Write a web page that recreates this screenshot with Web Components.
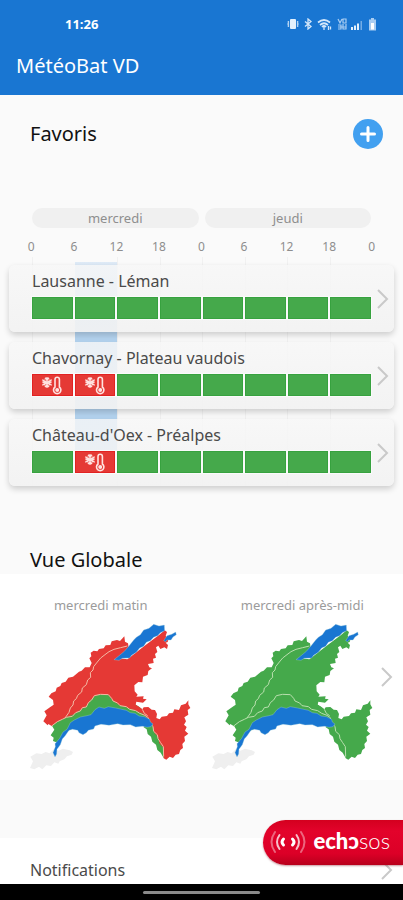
<!DOCTYPE html>
<html lang="fr">
<head>
<meta charset="utf-8">
<meta name="viewport" content="width=device-width, initial-scale=1">
<title>MétéoBat VD</title>
<style>
  body { margin: 0; background: #fafafa; font-family: "Noto Sans", "Open Sans", sans-serif; color: #444; }
</style>
</head>
<body>
<meteo-app></meteo-app>

<script>
const define = (name, html, setup) => {
  const template = document.createElement('template');
  template.innerHTML = html;
  customElements.define(name, class extends HTMLElement {
    constructor() {
      super();
      this.attachShadow({ mode: 'open' }).append(template.content.cloneNode(true));
    }
    connectedCallback() { if (setup) setup(this, this.shadowRoot); }
  });
};

define('chevron-icon', `
<style>:host { display: block; width: 12px; height: 20px; } svg { display: block; }</style>
<svg width="12" height="20" viewBox="0 0 12 20" fill="none" stroke="#c9c9c9" stroke-width="2"><path d="M1 1l9 9-9 9"/></svg>`);

define('status-bar', `
<style>
  :host { display: flex; justify-content: space-between; align-items: center; height: 48px; padding: 0 25px 0 65px; color: #fff; font: 700 13px/16px "Open Sans", sans-serif; }
  div { display: flex; align-items: center; gap: 4px; }
  svg { display: block; }
</style>
<span>11:26</span>
<div>
  <svg width="12" height="12" viewBox="0 0 12 12" fill="#e3f0fc"><rect x="3" y="1" width="6" height="10" rx="1"/><path d="M1.400 3v6M10.600 3v6" stroke="#b5d4f3" stroke-width="1.400"/><path d="M0 5v2M12 5v2" stroke="#8fbeec"/></svg>
  <svg width="10" height="12" viewBox="0 0 10 12" fill="none" stroke="#d4e7fa" stroke-width="1.300"><path d="M2 3.500l6 5-3 2.500V1l3 2.500-6 5"/></svg>
  <svg width="16" height="13" viewBox="0 0 16 13" fill="none" stroke="#d4e7fa" stroke-width="1.700"><path d="M1 4.500q6-5 12 0M3 7q4-3.500 8 0M5 9q2-2 4 0"/><path d="M7 9v3M11.500 8v4M13.500 8.500v3" stroke-width="1.300"/></svg>
  <svg width="10" height="12" viewBox="0 0 10 12" fill="none" stroke="#a9cdf2" stroke-width="1.200"><path d="M1 1l2 4 2-4M6 1h3v4H6zM1 7h3v4H1M6 6v5h3V6M1 9h8"/></svg>
  <svg width="12" height="11" viewBox="0 0 12 11" fill="#e3f0fc"><path d="M0 8h2v3H0zM3 6.500h2V11H3zM6 4.500h2V11H6z"/><path d="M9.500 2h1.500v9H9.500z" opacity=".45"/></svg>
  <svg width="11" height="13" viewBox="0 0 11 13" fill="none"><path d="M4 0h3v1.500h2V12.500H2V1.500h2z" fill="#a9cdf2"/><path d="M4 5h3v6.500H4z" fill="#fff"/></svg>
</div>`);

define('app-header', `
<style>
  :host { display: block; background: #1976d2; color: #fff; }
  h1 { margin: 0; padding: 4px 16px 15px; font-size: 20px; line-height: 28px; font-weight: 400; }
</style>
<status-bar></status-bar>
<h1><slot></slot></h1>`);

define('section-title', `
<style>
  :host { display: flex; align-items: center; justify-content: space-between; padding: 0 20px 0 30px; color: #111; }
  h2 { margin: 0; font-size: 20px; line-height: 28px; font-weight: 400; }
</style>
<h2><slot></slot></h2><slot name="action"></slot>`);

define('add-button', `
<style>
  :host { display: block; }
  button { display: block; width: 30px; height: 30px; padding: 0; border: 0; border-radius: 50%; background: #42a0f0; cursor: pointer; }
  svg { display: block; }
</style>
<button type="button" aria-label="Ajouter un favori"><svg width="30" height="30" viewBox="0 0 30 30" stroke="#fff" stroke-width="3" stroke-linecap="round"><path d="M15 8.500v13M8.500 15h13"/></svg></button>`);

define('time-axis', `
<style>
  :host { display: block; color: #8e8e8e; }
  .days { display: grid; grid-template-columns: 1fr 1fr; gap: 6px; padding: 0 32px; }
  .days span { border-radius: 10px; background: #f0f0f0; font-size: 13px; line-height: 20px; text-align: center; }
  .hours { display: grid; grid-template-columns: repeat(9, 1fr); padding: 9px 10px 0; font-size: 12px; line-height: 20px; text-align: center; }
</style>
<div class="days"><span>mercredi</span><span>jeudi</span></div>
<div class="hours"></div>`,
(host, root) => {
  root.querySelector('.hours').innerHTML = [0, 6, 12, 18, 0, 6, 12, 18, 0].map(h => `<span>${h}</span>`).join('');
});

define('forecast-board', `
<style>
  :host { display: block; position: relative; padding: 8px 9px 0; }
  .lines { position: absolute; inset: 0 31px 0 32px; display: grid; grid-template-columns: repeat(8, 1fr); }
  .lines i { border-left: 1px solid #f1f1f1; }
  .lines i:nth-child(2) { margin: 5px 0 36px; border: 0; background: linear-gradient(#dfebf7, #b4d3ef 60px); }
  .cards { position: relative; display: grid; gap: 10px; }
</style>
<div class="lines"><i></i><i></i><i></i><i></i><i></i><i></i><i></i><i></i></div>
<div class="cards"><slot></slot></div>`);

define('forecast-card', `
<style>
  :host { display: block; }
  a { display: grid; grid-template-columns: 1fr 23px; align-items: center; padding-left: 23px; border-radius: 6px; background: linear-gradient(rgba(247,247,247,.8), rgba(242,242,242,.92)); box-shadow: 0 3px 6px rgba(0,0,0,.18); color: #4a4a4a; text-decoration: none; }
  .content { padding: 5px 0 13px; }
  .name { font-size: 16px; line-height: 22px; }
  .bar { display: grid; grid-template-columns: repeat(8, 1fr); gap: 2px; height: 22px; margin-top: 5px; }
  .bar span { display: grid; place-items: center; background: #45a94b; box-shadow: inset 0 0 0 1px #37a23f; outline: 1px solid #fafafa; }
  .bar .cold { background: #e53935; box-shadow: inset 0 0 0 1px #e22222; }
  chevron-icon { justify-self: center; }
</style>
<a href="#">
  <div class="content"><div class="name"><slot></slot></div><div class="bar"></div></div>
  <chevron-icon></chevron-icon>
</a>`,
(host, root) => {
  const cold = `<svg width="22" height="20" viewBox="0 0 22 20" fill="none" stroke="#ffe3e1"><circle cx="6" cy="7.500" r="4.500" fill="#ffe3e1" fill-opacity=".35" stroke="none"/><path d="M6 2v11M1.200 4.800l9.600 5.500M1.200 10.300l9.600-5.500M4 2.800l2 2 2-2M4 12l2-2 2 2M1.500 7l2.500.500L3.500 10M10.500 7L8 7.500l.500 2.500" stroke-width="1.300"/><path d="M14 12V4.500a2.200 2.200 0 0 1 4.400 0V12a3.700 3.700 0 1 1-4.400 0z" stroke-width="1.600"/><circle cx="16.200" cy="15" r="2" fill="#ffe3e1" stroke="none"/></svg>`;
  root.querySelector('.bar').innerHTML = [...host.getAttribute('levels')]
    .map(l => l === 'c' ? `<span class="cold" role="img" aria-label="Froid">${cold}</span>` : '<span></span>').join('');
});

define('region-map', `
<style>
  :host { display: block; --plain: #45a94b; --border: #b9dfae; }
  :host([alert]) { --plain: #e53935; --border: #f3b9a4; }
  figure { margin: 0; display: flex; flex-direction: column; align-items: center; }
  figcaption { color: #9b9b9b; font-size: 13px; line-height: 18px; }
  svg { display: block; margin-top: 8px; }
  :host([side="left"]) svg { margin-left: 20px; }
  :host([side="right"]) svg { margin-right: 20px; }
</style>
<figure>
  <figcaption><slot></slot></figcaption>
  <svg width="163" height="150" viewBox="30 96 489 450" stroke-linejoin="round" aria-hidden="true">
    <path fill="#efefef" d="M33 534L42 514 34 500 52 490 68 492 80 486 92 490 106 476 118 482 132 476 152 481 162 486 158 494 144 499 136 508 122 514 118 521 106 517 96 528 82 526 70 538 60 530 46 538z"/>
    <path fill="#45a94b" d="M98 406L106 419 95 436 104 443 102 453 116 458 140 425 200 400 380 400 374 412 383 418 386 432 396 440 400 455 411 464 415 480 425 488 434 504 444 470 410 390 360 350 280 300 230 305 150 370z"/>
    <path fill="var(--plain)" d="M316 139L318 155 327 160 329 173 312 192 300 205 325 208 380 165 420 135 437 121 444 126 440 138 449 146 446 156 440 158 447 165 444 177 436 172 424 177 418 167 411 172 415 186 408 192 411 203 402 206 404 219 387 222 391 232 399 235 388 243 386 255 372 260 370 277 358 276 346 286 347 304 356 314 352 320 374 319 372 326 383 328 372 338 352 335 350 344 360 350 370 358 374 352 388 351 398 359 408 360 414 372 412 384 422 388 428 380 444 378 450 370 462 368 466 358 480 360 486 346 500 341 508 331 508 343 514 354 506 360 508 374 496 382 501 394 495 404 503 411 498 422 508 431 496 440 498 453 490 462 492 474 484 480 480 492 470 494 462 504 452 500 442 509 434 505 434 474 421 460 418 442 406 428 400 402 385 385 370 370 350 362 330 355 300 345 280 330 268 314 245 313 228 317 215 330 200 350 180 362 160 375 142 382 130 388 115 395 98 408 88 402 86 406 73 394 83 376 76 364 94 351 104 344 102 330 89 320 97 310 110 304 113 293 124 288 128 279 140 275 148 263 162 260 180 245 188 242 198 232 212 232 218 219 211 205 217 199 215 188 224 182 235 184 240 177 254 175 260 166 274 165 278 154 294 150 303 153z"/>
    <path fill="none" stroke="var(--border)" stroke-width="3" d="M325 168L305 173 285 178 270 185 258 194 245 204 235 216 224 230 222 240 214 248 215 262 206 270 202 284 190 294 188 306 176 316 172 326 164 333 162 345 154 354 150 367 138 384M98 408L115 395 130 388 142 382 160 379 170 368 184 363 190 353 202 351 208 338 218 330 226 317 245 313 268 314 278 325 282 333 296 339 303 347 322 350 332 358 350 362 362 370 378 376 388 383 390 396 402 410 404 424 415 434 417 446 425 458 433 470 434 500M370 358L376 370 386 377"/>
    <g fill="#1976d2" stroke="#a9d4dd" stroke-width="1">
      <path d="M285 209L299 198 316 184 328 170 344 150 352 142 364 134 374 120 390 115 404 103 420 108 436 105 437 122 424 128 416 137 404 142 394 152 382 157 374 169 362 174 352 187 338 196 332 204 310 205 300 211z"/>
      <path d="M434 152L444 137 458 133 470 126 472 134 462 141 456 150 444 150 440 155z"/>
      <path d="M108 501L102 488 109 470 108 461 122 445 132 426 144 418 154 398 166 390 184 381 204 377 216 374 228 359 240 351 256 355 268 350 290 354 304 357 322 361 334 368 348 370 360 378 376 380 392 388 394 396 402 402 396 410 384 412 370 409 350 411 334 404 312 405 296 401 270 406 246 403 228 408 224 417 208 421 202 428 192 434 180 428 176 421 160 418 150 421 138 438 130 447 124 464 114 478 113 492z"/>
    </g>
  </svg>
</figure>`);

define('global-view', `
<style>
  :host { display: block; }
  a { display: grid; grid-template-columns: 1fr 1fr; position: relative; padding: 22px 0 8px; background: #fff; color: inherit; text-decoration: none; }
  chevron-icon { position: absolute; right: 10px; top: calc(50% - 10px); }
</style>
<a href="#"><slot></slot><chevron-icon></chevron-icon></a>`);

define('menu-row', `
<style>
  :host { display: block; }
  a { display: flex; align-items: center; justify-content: space-between; padding: 21px 10px 3px 30px; background: #fff; color: #4a4a4a; font-size: 16px; line-height: 22px; text-decoration: none; }
</style>
<a href="#"><slot></slot><chevron-icon></chevron-icon></a>`);

define('sos-button', `
<style>
  :host { display: block; }
  button { display: flex; align-items: center; gap: 6px; height: 45px; padding: 0 13px 3px 6px; border: 0; border-radius: 23px 0 0 23px; background: linear-gradient(#d4001f, #e3032b 25%, #dc0027 75%, #b8001c); box-shadow: 0 1px 2px rgba(120,0,20,.4); color: #fff; cursor: pointer; }
  svg { display: block; margin-top: 2px; }
  span { font: 900 22px/24px Lato, sans-serif; }
  span span { font-weight: 300; }
</style>
<button type="button">
  <svg width="38" height="26" viewBox="0 0 38 26" fill="none" stroke="#fff" stroke-linecap="round">
    <path d="M14.500 10q-3 3 0 6M23.500 10q3 3 0 6" stroke-width="3"/>
    <path d="M10.500 6q-5 7 0 14M27.500 6q5 7 0 14" stroke-width="2" opacity=".75"/>
    <path d="M6 3q-7 10 0 20M32 3q7 10 0 20" stroke-width="2" opacity=".4"/>
  </svg>
  <span>echɔ<span>sos</span></span>
</button>`);

define('meteo-app', `
<style>
  :host { display: flex; flex-direction: column; position: relative; min-height: 100vh; }
  .favoris { margin-top: 24px; }
  time-axis { margin-top: 59px; }
  .globale { margin-top: 60px; }
  menu-row { margin-top: 58px; }
  sos-button { position: absolute; right: 0; bottom: 35px; }
  footer { display: grid; place-items: center; height: 16px; margin-top: auto; background: #000; }
  footer i { width: 29%; height: 3px; border-radius: 2px; background: #8a8a8a; }
</style>
<app-header>MétéoBat VD</app-header>
<section-title class="favoris">Favoris<add-button slot="action"></add-button></section-title>
<time-axis></time-axis>
<forecast-board>
  <forecast-card levels="gggggggg">Lausanne - Léman</forecast-card>
  <forecast-card levels="ccgggggg">Chavornay - Plateau vaudois</forecast-card>
  <forecast-card levels="gcgggggg">Château-d'Oex - Préalpes</forecast-card>
</forecast-board>
<section-title class="globale">Vue Globale</section-title>
<global-view>
  <region-map alert side="left">mercredi matin</region-map>
  <region-map side="right">mercredi après-midi</region-map>
</global-view>
<menu-row>Notifications</menu-row>
<sos-button></sos-button>
<footer><i></i></footer>`);
</script>
</body>
</html>
